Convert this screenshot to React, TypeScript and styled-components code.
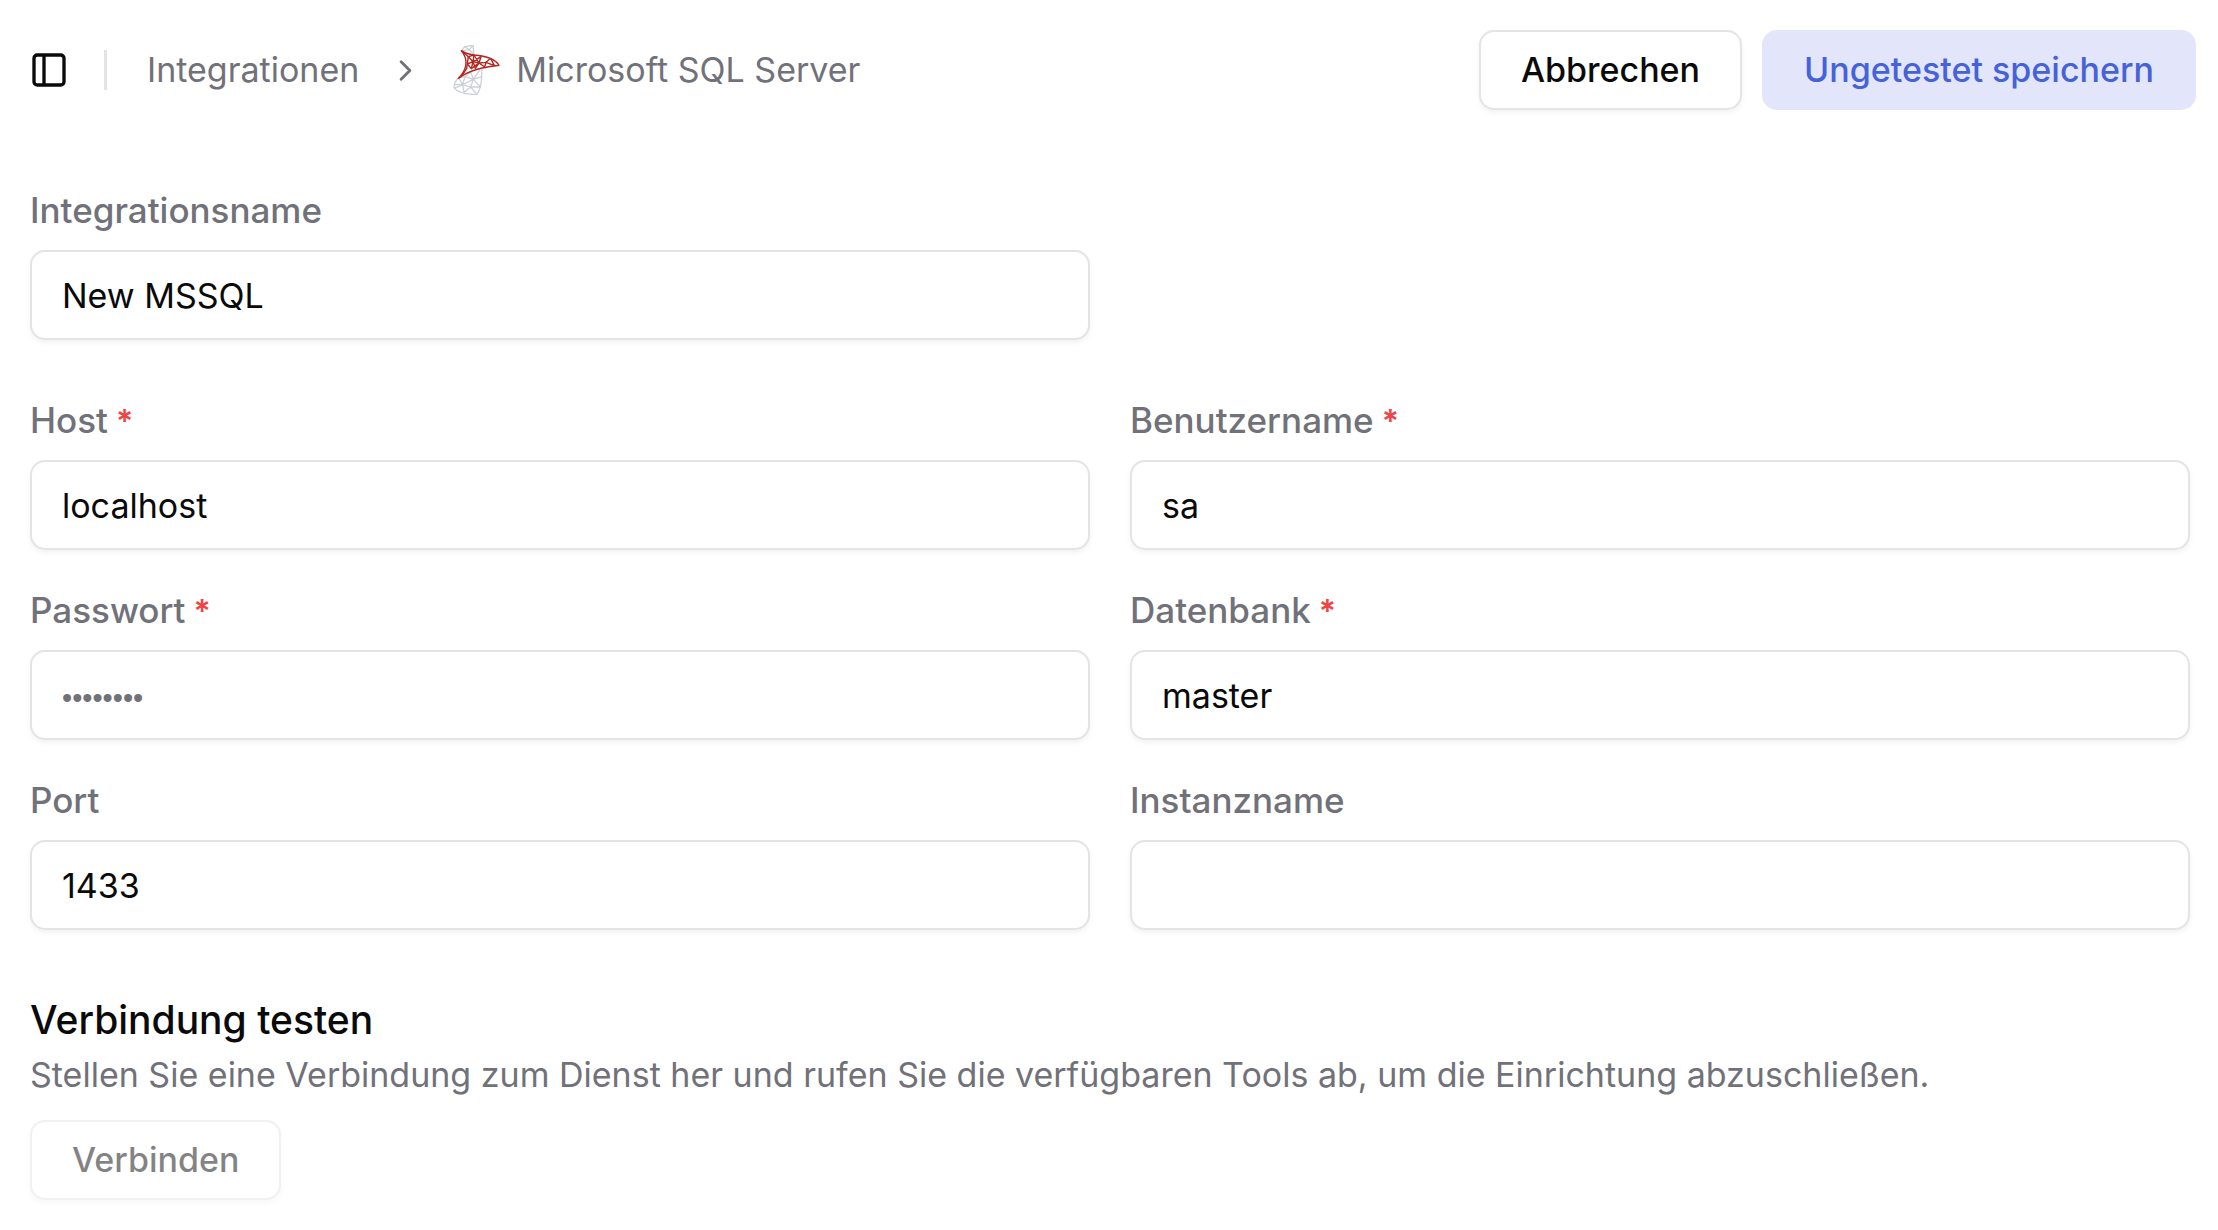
import React from "react";
import styled, { createGlobalStyle, css } from "styled-components";
import { ChevronRight } from "lucide-react";

const color = {
  text: "#0a0a0a",
  muted: "#71717a",
  border: "#e4e4e4",
  danger: "#ef4444",
  primary: "#4562d9",
  primarySoft: "#e3e6fa",
};

const GlobalStyle = createGlobalStyle`
  *, *::before, *::after { box-sizing: border-box; }
  body {
    margin: 0;
    background: #ffffff;
    color: ${color.text};
    font-family: Inter, "Liberation Sans", sans-serif;
    font-size: 34px;
    line-height: 50px;
  }
`;

const Header = styled.header`
  display: flex;
  align-items: center;
  justify-content: space-between;
  padding: 30px 22px 30px 29px;
`;

const HeaderGroup = styled.div`
  display: flex;
  align-items: center;
`;

const Actions = styled.div`
  display: flex;
  gap: 20px;
`;

const IconButton = styled.button`
  display: flex;
  padding: 0;
  border: 0;
  background: none;
  color: inherit;
  cursor: pointer;
`;

const Separator = styled.div`
  width: 3px;
  height: 40px;
  margin: 0 40px 0 35px;
  background: ${color.border};
`;

const Crumbs = styled.ol`
  display: flex;
  align-items: center;
  gap: 29px;
  margin: 0;
  padding: 0;
  list-style: none;
  color: ${color.muted};
`;

const Crumb = styled.li`
  display: flex;
  align-items: center;
  gap: 14px;
`;

const CrumbLink = styled.a`
  color: inherit;
  text-decoration: none;
`;

const Button = styled.button<{ $variant: "outline" | "soft" }>`
  height: 80px;
  padding: 0 40px;
  border: 2px solid ${color.border};
  border-radius: 15px;
  background: #ffffff;
  color: ${color.text};
  font: inherit;
  font-weight: 500;
  white-space: nowrap;
  cursor: pointer;
  box-shadow: 0 3px 5px rgba(0, 0, 0, 0.05);

  ${(p) =>
    p.$variant === "soft" &&
    css`
      border-color: transparent;
      background: ${color.primarySoft};
      background-clip: border-box;
      color: ${color.primary};
      box-shadow: none;
    `}

  &:disabled {
    opacity: 0.5;
    cursor: default;
  }
`;

const Main = styled.main`
  padding: 45px 28px 30px 30px;
`;

const Grid = styled.div`
  display: grid;
  grid-template-columns: 1fr 1fr;
  gap: 35px 40px;
  margin-bottom: 55px;
`;

const Field = styled.div`
  display: flex;
  flex-direction: column;
  gap: 15px;
`;

const Label = styled.label`
  color: ${color.muted};
  font-size: 35px;
  font-weight: 500;
`;

const Required = styled.span`
  color: ${color.danger};
  font-size: 32px;
  font-weight: 600;
  line-height: 1;
`;

const Input = styled.input`
  width: 100%;
  height: 90px;
  padding: 0 30px;
  border: 2px solid ${color.border};
  border-radius: 15px;
  background: #ffffff;
  color: inherit;
  font: inherit;
  box-shadow: 0 3px 5px rgba(0, 0, 0, 0.05);
  outline: none;

  &::placeholder {
    color: ${color.muted};
    opacity: 1;
    font-family: "Liberation Sans", Arial, sans-serif;
    font-size: 29px;
  }
`;

const TestSection = styled.section`
  display: flex;
  flex-direction: column;
  align-items: flex-start;
  padding-top: 10px;
`;

const Title = styled.h2`
  margin: 0 0 5px;
  font-size: 39px;
  font-weight: 500;
`;

const Description = styled.p`
  margin: 0 0 20px;
  color: ${color.muted};
`;

function PanelIcon() {
  return (
    <svg width="40" height="40" viewBox="0 0 24 24" fill="none" stroke="currentColor" strokeWidth="2" aria-hidden="true">
      <rect x="3" y="3" width="18" height="18" rx="2" />
      <path d="M9 3v18" />
    </svg>
  );
}

function SqlServerLogo() {
  return (
    <svg width="50" height="50" viewBox="66 42 150 150" fill="none" strokeLinejoin="round" aria-hidden="true">
      <g stroke="#c9d1d5" strokeWidth="3.8">
        <path d="M94 60L104 47L129 43L132 70" />
        <path d="M104 47L118 56L129 43M94 60L118 56L131 68" />
        <path d="M86 141C76 150 70 161 73 172C84 184 112 190 141 191C149 179 157 154 155 114" />
        <path d="M86 141L105 137L130 145L156 137M105 137L122 122L130 145L150 116" />
        <path d="M73 161L98 161L130 145L122 168L98 161L86 141M98 161L105 137" />
        <path d="M73 172L98 161L102 184L122 168L141 191M122 168L152 168L130 145" />
      </g>
      <g stroke="#b3261f" strokeWidth="4.2">
        <path d="M94 59C104 67 118 70 132 72C166 75 196 84 207 103C172 108 125 112 85 142C107 121 119 89 94 59Z" />
        <path d="M94 59L115 77L132 72L129 92L115 77M112 99L129 92L124 113L112 99" />
        <path d="M132 72L147 96L129 92L153 77L147 96L168 94L182 82" />
        <path d="M147 96L136 112L129 92M182 82L193 104L168 94L164 108L147 96L124 113" />
        <path d="M115 77L110 112L98 131" />
      </g>
    </svg>
  );
}

type FieldSpec = {
  id: string;
  label: string;
  value?: string;
  type?: string;
  placeholder?: string;
  required?: boolean;
};

const connectionFields: FieldSpec[] = [
  { id: "host", label: "Host", value: "localhost", required: true },
  { id: "username", label: "Benutzername", value: "sa", required: true },
  { id: "password", label: "Passwort", type: "password", placeholder: "••••••••", required: true },
  { id: "database", label: "Datenbank", value: "master", required: true },
  { id: "port", label: "Port", value: "1433" },
  { id: "instance", label: "Instanzname" },
];

function TextField({ id, label, value = "", type = "text", placeholder, required }: FieldSpec) {
  return (
    <Field>
      <Label htmlFor={id}>
        {label}
        {required && <Required> *</Required>}
      </Label>
      <Input id={id} name={id} type={type} defaultValue={value} placeholder={placeholder} required={required} />
    </Field>
  );
}

export default function App() {
  return (
    <>
      <GlobalStyle />
      <Header>
        <HeaderGroup>
          <IconButton type="button" aria-label="Seitenleiste umschalten">
            <PanelIcon />
          </IconButton>
          <Separator />
          <nav aria-label="Breadcrumb">
            <Crumbs>
              <Crumb>
                <CrumbLink href="#integrationen">Integrationen</CrumbLink>
              </Crumb>
              <Crumb aria-hidden="true">
                <ChevronRight size={35} />
              </Crumb>
              <Crumb aria-current="page">
                <SqlServerLogo />
                Microsoft SQL Server
              </Crumb>
            </Crumbs>
          </nav>
        </HeaderGroup>
        <Actions>
          <Button type="button" $variant="outline">Abbrechen</Button>
          <Button type="submit" form="integration" $variant="soft">Ungetestet speichern</Button>
        </Actions>
      </Header>
      <Main>
        <form id="integration" noValidate>
          <Grid>
            <TextField id="name" label="Integrationsname" value="New MSSQL" />
          </Grid>
          <Grid>
            {connectionFields.map((field) => (
              <TextField key={field.id} {...field} />
            ))}
          </Grid>
          <TestSection>
            <Title>Verbindung testen</Title>
            <Description>
              Stellen Sie eine Verbindung zum Dienst her und rufen Sie die verfügbaren Tools ab, um die Einrichtung
              abzuschließen.
            </Description>
            <Button type="button" $variant="outline" disabled>Verbinden</Button>
          </TestSection>
        </form>
      </Main>
    </>
  );
}
